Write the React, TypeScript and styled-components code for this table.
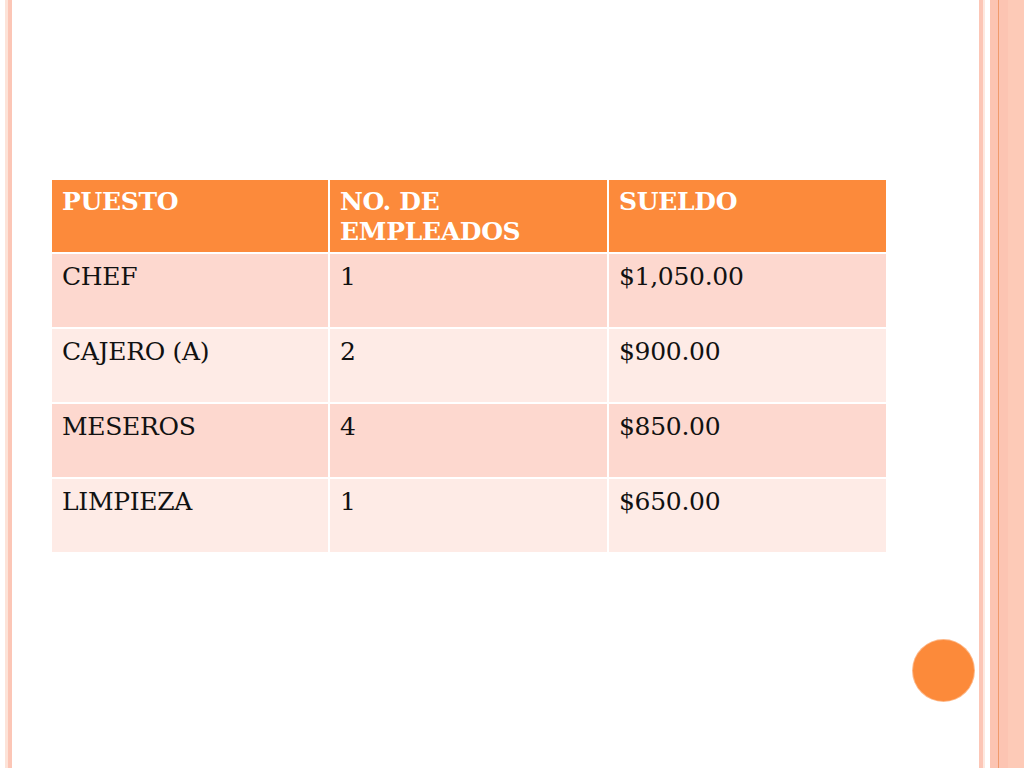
import React from "react";
import styled, { createGlobalStyle } from "styled-components";

const Global = createGlobalStyle`
  html, body { margin: 0; padding: 0; background: #ffffff; }
  body { font-family: "DejaVu Serif", "Liberation Serif", serif; }
`;

const Slide = styled.div`
  position: relative;
  width: 1024px;
  height: 768px;
  display: flex;
  overflow: hidden;
  background: #ffffff;
`;

const Stripe = styled.div<{ $w: number; $c: string }>`
  flex: 0 0 ${(p) => p.$w}px;
  width: ${(p) => p.$w}px;
  height: 100%;
  background: ${(p) => p.$c};
`;

const Main = styled.div`
  flex: 1 1 auto;
  padding: 180px 0 0 40px;
`;

const Table = styled.div`
  display: grid;
  grid-template-columns: 276px 277px 277px;
  gap: 2px;
  width: 834px;
`;

const Cell = styled.div<{ $kind: "head" | "odd" | "even" }>`
  box-sizing: border-box;
  height: ${(p) => (p.$kind === "head" ? 72 : 73)}px;
  padding: ${(p) => (p.$kind === "head" ? 7 : 8)}px 10px 0 10px;
  font-size: 25px;
  line-height: 30px;
  letter-spacing: -0.3px;
  color: ${(p) => (p.$kind === "head" ? "#ffffff" : "#111111")};
  font-weight: ${(p) => (p.$kind === "head" ? 700 : 400)};
  background: ${(p) =>
    p.$kind === "head" ? "#fc8a3b" : p.$kind === "odd" ? "#fdd8cf" : "#feebe6"};
`;

const Dot = styled.div`
  position: absolute;
  left: 913px;
  top: 640px;
  width: 61px;
  height: 61px;
  border-radius: 50%;
  background: #fc8a3a;
  box-shadow: 0 0 0 1px #fdb889;
`;

const rows = [
  ["CHEF", "1", "$1,050.00"],
  ["CAJERO (A)", "2", "$900.00"],
  ["MESEROS", "4", "$850.00"],
  ["LIMPIEZA", "1", "$650.00"],
];

export default function App() {
  return (
    <>
      <Global />
      <Slide>
        <Stripe $w={5} $c="#ffffff" />
        <Stripe $w={3} $c="#fde3d8" />
        <Stripe $w={4} $c="#fcc6b6" />
        <Main>
          <Table>
            <Cell $kind="head">PUESTO</Cell>
            <Cell $kind="head">
              NO. DE
              <br />
              EMPLEADOS
            </Cell>
            <Cell $kind="head">SUELDO</Cell>
            {rows.map((r, i) =>
              r.map((v, j) => (
                <Cell key={`${i}-${j}`} $kind={i % 2 === 0 ? "odd" : "even"}>
                  {v}
                </Cell>
              ))
            )}
          </Table>
        </Main>
        <Stripe $w={4} $c="#fcc6b6" />
        <Stripe $w={2} $c="#fde8df" />
        <Stripe $w={5} $c="#ffffff" />
        <Stripe $w={8} $c="#fcc4b2" />
        <Stripe $w={1} $c="#f09a6c" />
        <Stripe $w={9} $c="#fcc4b2" />
        <Stripe $w={16} $c="#fdcab7" />
        <Dot />
      </Slide>
    </>
  );
}
